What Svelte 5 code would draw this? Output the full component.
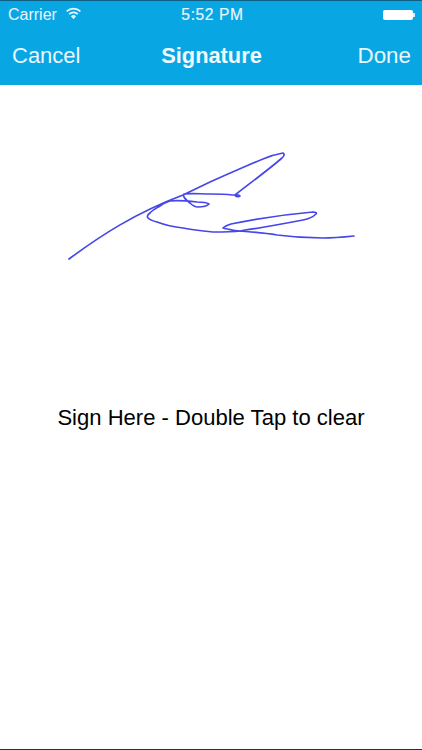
<script>
  const sig = "M69 259 C 100 236 135 213 183 195 L 210 182 C 228 174 246 166 263 159 C 270 156 277 154 283 153 C 285 154 284 156 282 158 C 267 171 250 183 235 195 C 236 197 239 197 240 196 C 238 194 236 195 232 195 C 225 194 218 194 210 194 C 201 194 192 193 184 194 C 182 196 186 200 190 203 C 193 206 196 207 198 207 C 203 207 207 206 209 204 C 206 202 202 202 197 202 C 188 201 178 200 170 201 C 166 202 163 204 160 206 C 155 209 151 211 150 213 C 147 215 147 217 148 218 C 150 220 153 221 157 222 C 165 225 174 227 183 228 C 193 230 203 231 213 232 C 222 232 232 232 240 231 C 234 231 228 229 223 228 C 225 226 228 225 231 224 C 255 219 290 214 313 212 C 316 212 317 213 316 214 C 313 217 308 219 303 220 C 282 224 260 228 240 231 C 253 232 265 233 277 235 C 292 237 308 238 323 238 C 334 238 344 237 354 236";
</script>

<div class="page">
  <header class="bar">
    <div class="status">
      <div class="carrier">
        <span>Carrier</span>
        <svg class="wifi" viewBox="0 0 16 12" width="17" height="13" aria-hidden="true">
          <path d="M8 11.4 L5.6 8.6 A3.6 3.6 0 0 1 10.4 8.6 Z" fill="#e8f6fd"/>
          <path d="M3.9 6.6 A6 6 0 0 1 12.1 6.6" fill="none" stroke="#e8f6fd" stroke-width="1.5"/>
          <path d="M1.5 4 A9.4 9.4 0 0 1 14.5 4" fill="none" stroke="#e8f6fd" stroke-width="1.5"/>
        </svg>
      </div>
      <div class="time">5:52 PM</div>
      <div class="battery">
        <span class="cell"></span>
        <span class="nub"></span>
      </div>
    </div>
    <nav class="nav">
      <span class="action">Cancel</span>
      <span class="title">Signature</span>
      <span class="action done">Done</span>
    </nav>
  </header>

  <main class="canvas">
    <svg class="signature" viewBox="0 85 422 215" width="422" height="215" aria-hidden="true">
      <path d={sig} fill="none" stroke="#4646ea" stroke-width="1.7" stroke-linecap="round" stroke-linejoin="round"/>
    </svg>
    <p class="hint">Sign Here - Double Tap to clear</p>
  </main>
</div>

<style>
  :global(body) {
    margin: 0;
    background: #fff;
  }

  .page {
    width: 422px;
    height: 750px;
    box-sizing: border-box;
    display: flex;
    flex-direction: column;
    border-bottom: 1px solid #2e2e2e;
    font-family: "Liberation Sans", Arial, sans-serif;
    overflow: hidden;
  }

  .bar {
    height: 85px;
    box-sizing: border-box;
    background: #09a6e4;
    border-top: 1px solid #0f5f85;
    color: #e8f6fd;
    display: flex;
    flex-direction: column;
  }

  .status {
    height: 28px;
    display: grid;
    grid-template-columns: 1fr auto 1fr;
    align-items: center;
    padding: 0 7px 0 8px;
    font-size: 16px;
  }

  .carrier {
    display: flex;
    align-items: center;
    gap: 8px;
  }

  .wifi {
    margin-top: -3px;
  }

  .time {
    font-size: 15.6px;
    letter-spacing: 0.6px;
    font-weight: 500;
    -webkit-text-stroke: 0.2px #e8f6fd;
    margin-left: 2px;
  }

  .battery {
    justify-self: end;
    display: flex;
    align-items: center;
    gap: 0;
  }

  .cell {
    width: 30px;
    height: 10px;
    background: #fff;
    border-radius: 2px;
  }

  .nub {
    width: 2px;
    height: 4px;
    background: #d5eefa;
  }

  .nav {
    flex: 1;
    display: grid;
    grid-template-columns: 1fr auto 1fr;
    align-items: center;
    padding: 0 11px 3px 12px;
    font-size: 22px;
  }

  .done {
    justify-self: end;
    font-size: 22.4px;
  }

  .title {
    font-weight: 700;
    font-size: 21.8px;
    color: #f0f9fe;
  }

  .canvas {
    flex: 1;
    display: flex;
    flex-direction: column;
    background: #fff;
  }

  .signature {
    display: block;
  }

  .hint {
    margin: 105px 0 0;
    text-align: center;
    font-size: 22.05px;
    line-height: 26px;
    color: #000;
  }
</style>
